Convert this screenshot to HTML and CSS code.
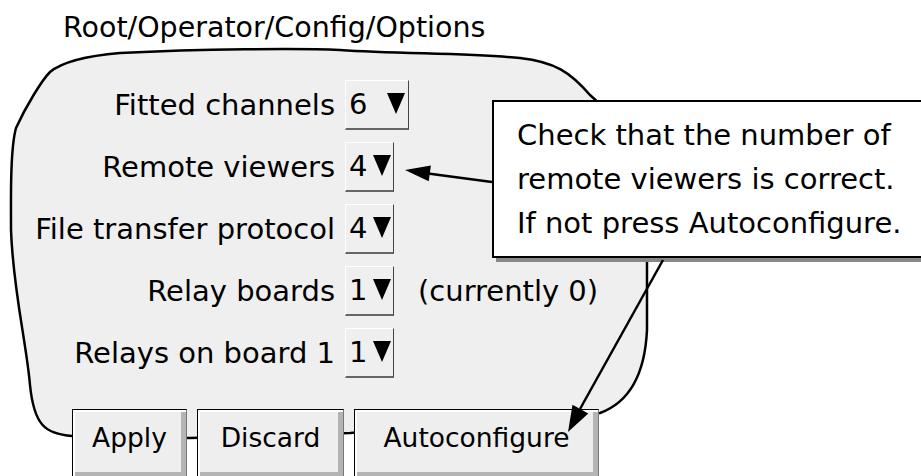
FILE: index.html
```html
<!DOCTYPE html>
<html lang="en">
<head>
    <meta charset="UTF-8">
    <title>Root/Operator/Config/Options</title>
    <meta name="viewport" content="width=device-width, initial-scale=1">

    <link rel="stylesheet" href="styles.css">
</head>
<body>
    <div class="stage">
        <!-- the rounded screen outline behind the form -->
        <svg class="sketch" width="921" height="476" viewBox="0 0 921 476">
            <path d="M 72,436 L 190,438 L 350,433 L 600,413
                     C 630,402 645,372 647,330 L 647,250
                     C 647,180 620,120 590,95
                     C 570,72 555,62 520,58
                     C 470,53 400,54 340,50
                     C 300,48 200,49 120,53
                     C 85,56 62,62 50,72
                     C 42,80 26,106 16,128
                     C 10,150 11,200 11,230
                     C 13,290 26,340 30,385
                     C 34,425 45,434 72,436 Z"
                  fill="#efefef" stroke="#000" stroke-width="2.5" />
        </svg>

        <div class="title">Root/Operator/Config/Options</div>

        <div class="form">
            <span class="label">Fitted channels</span>
            <span class="pick pick-wide">6<i class="arrow"></i></span>

            <span class="label">Remote viewers</span>
            <span class="pick">4<i class="arrow"></i></span>

            <span class="label">File transfer protocol</span>
            <span class="pick">4<i class="arrow"></i></span>

            <span class="label">Relay boards</span>
            <span class="pick">1<i class="arrow"></i></span>
            <span class="note">(currently 0)</span>

            <span class="label">Relays on board 1</span>
            <span class="pick">1<i class="arrow"></i></span>
        </div>

        <div class="buttons">
            <button class="btn btn-apply">Apply</button>
            <button class="btn btn-discard">Discard</button>
            <button class="btn btn-auto">Autoconfigure</button>
        </div>

        <div class="callout">
            Check that the number of<br>
            remote viewers is correct.<br>
            If not press Autoconfigure.
        </div>

        <!-- pointers from the callout -->
        <svg class="arrows" width="921" height="476" viewBox="0 0 921 476">
            <line x1="492" y1="182" x2="428" y2="173.4" stroke="#000" stroke-width="2.5" />
            <polygon points="405,170 430.9,165.5 428.7,181.3" fill="#000" />
            <line x1="663" y1="260" x2="580" y2="409" stroke="#000" stroke-width="2.5" />
            <polygon points="568,432 588.3,413.4 572.5,404.8" fill="#000" />
        </svg>
    </div>
</body>
</html>
```

FILE: styles.css
```css
body {
    margin: 0;
    background: #fff;
    color: #000;
    font-family: "DejaVu Sans", "Liberation Sans", sans-serif;
}

.stage {
    position: relative;
    width: 921px;
    height: 476px;
    overflow: hidden;
}

.sketch,
.arrows {
    position: absolute;
    left: 0;
    top: 0;
}

.sketch {
    z-index: 0;
}

.arrows {
    z-index: 3;
    pointer-events: none;
}

.title {
    position: relative;
    height: 80px;
    box-sizing: border-box;
    padding: 14px 0 0 63px;
    font-size: 28.5px;
    line-height: 1;
}

.form {
    position: relative;
    z-index: 1;
    display: grid;
    grid-template-columns: 335px auto 1fr;
    grid-auto-rows: 50px;
    column-gap: 10px;
    row-gap: 12px;
    align-items: start;
    font-size: 29px;
}

.label {
    grid-column: 1;
    text-align: right;
    line-height: 50px;
    white-space: nowrap;
}

.pick {
    width: 49px;
    height: 50px;
    box-sizing: border-box;
    padding-left: 3px;
    line-height: 47px;
    background: #efefef;
    border-top: 1px solid #fff;
    border-left: 1px solid #fff;
    border-right: 1px solid #444;
    border-bottom: 2px solid #666;
    white-space: nowrap;
}

.pick-wide {
    width: 64px;
}

.arrow {
    display: inline-block;
    width: 0;
    height: 0;
    margin-left: 6px;
    border-left: 9px solid transparent;
    border-right: 9px solid transparent;
    border-top: 21px solid #000;
}

.pick-wide .arrow {
    margin-left: 20px;
}

.note {
    margin-left: -1px;
    line-height: 50px;
    white-space: nowrap;
}

.buttons {
    position: relative;
    z-index: 1;
    display: flex;
    gap: 10px;
    margin-top: 31px;
    padding-left: 72px;
}

.btn {
    height: 68px;
    box-sizing: border-box;
    padding: 15px 0 26px;
    margin: 0;
    font-family: inherit;
    font-size: 26.5px;
    line-height: 26px;
    color: #000;
    text-align: center;
    vertical-align: top;
    background: #eee;
    border: none;
    border-left: 1px solid #000;
    border-top: 1px solid #000;
    border-right: 1px solid #777;
    border-radius: 0;
    box-shadow: inset 2px 2px 0 #fff, inset -5px -5px 0 #b4b4b4;
}

.btn-apply {
    width: 115px;
}

.btn-discard {
    width: 147px;
}

.btn-auto {
    width: 245px;
}

.callout {
    position: absolute;
    z-index: 2;
    left: 492px;
    top: 100px;
    width: 440px;
    height: 158px;
    box-sizing: border-box;
    padding: 11px 0 0 23px;
    background: #fff;
    border: 2px solid #000;
    box-shadow: 4px 4px 0 #888;
    font-size: 29px;
    line-height: 44px;
    white-space: nowrap;
}
```
